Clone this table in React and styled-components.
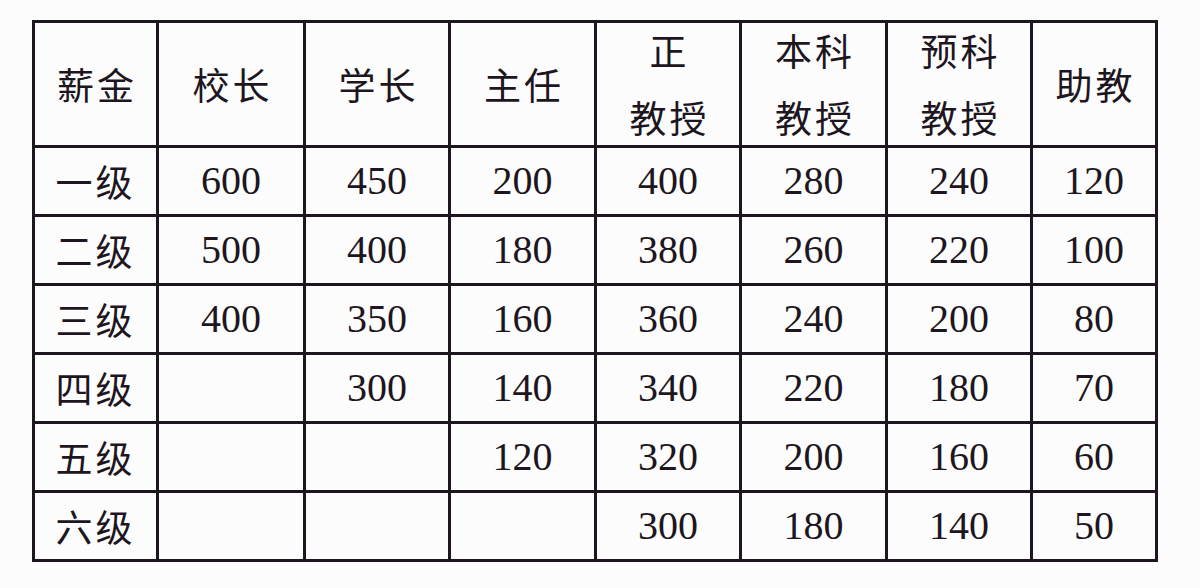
import styled, { createGlobalStyle } from "styled-components";

const GlobalStyle = createGlobalStyle`
  html, body {
    margin: 0;
    padding: 0;
    background: #fcfcfd;
  }
`;

const headers = [
  ["薪金"],
  ["校长"],
  ["学长"],
  ["主任"],
  ["正", "教授"],
  ["本科", "教授"],
  ["预科", "教授"],
  ["助教"],
];

const rows = [
  ["一级", "600", "450", "200", "400", "280", "240", "120"],
  ["二级", "500", "400", "180", "380", "260", "220", "100"],
  ["三级", "400", "350", "160", "360", "240", "200", "80"],
  ["四级", "", "300", "140", "340", "220", "180", "70"],
  ["五级", "", "", "120", "320", "200", "160", "60"],
  ["六级", "", "", "", "300", "180", "140", "50"],
];

const colWidths = [124, 147, 145, 146, 145, 146, 145, 125];

const Page = styled.div`
  width: 1200px;
  height: 588px;
  box-sizing: border-box;
  padding: 20px 0 0 32px;
  background: #fcfcfd;
`;

const Table = styled.table`
  border-collapse: collapse;
  table-layout: fixed;
  width: 1126px;
  border: 3px solid #1d1620;
  color: #1d1620;
`;

const HeadCell = styled.th`
  height: 122px;
  border: 3px solid #1d1620;
  padding: 0;
  font-family: "Noto Sans CJK SC", "Noto Sans", sans-serif;
  font-weight: 400;
  font-size: 37px;
  letter-spacing: 3px;
  line-height: 1;
  text-align: center;
  vertical-align: middle;
`;

const HeadLines = styled.div`
  display: flex;
  flex-direction: column;
  align-items: center;
  gap: 30px;
  padding-left: 3px;
`;

const Cell = styled.td`
  height: 66px;
  border: 3px solid #1d1620;
  padding: 0;
  text-align: center;
  vertical-align: middle;
  font-family: ${(p) =>
    p.$label
      ? `"Noto Sans CJK SC", "Noto Sans", sans-serif`
      : `"Liberation Serif", "Times New Roman", serif`};
  font-size: ${(p) => (p.$label ? "37px" : "40px")};
  letter-spacing: ${(p) => (p.$label ? "3px" : "0")};
  line-height: 1;
`;

export default function App() {
  return (
    <Page>
      <GlobalStyle />
      <Table>
        <colgroup>
          {colWidths.map((w, i) => (
            <col key={i} style={{ width: w }} />
          ))}
        </colgroup>
        <thead>
          <tr>
            {headers.map((lines, i) => (
              <HeadCell key={i}>
                <HeadLines>
                  {lines.map((l, j) => (
                    <span key={j}>{l}</span>
                  ))}
                </HeadLines>
              </HeadCell>
            ))}
          </tr>
        </thead>
        <tbody>
          {rows.map((r, i) => (
            <tr key={i}>
              {r.map((v, j) => (
                <Cell key={j} $label={j === 0}>
                  {v}
                </Cell>
              ))}
            </tr>
          ))}
        </tbody>
      </Table>
    </Page>
  );
}
